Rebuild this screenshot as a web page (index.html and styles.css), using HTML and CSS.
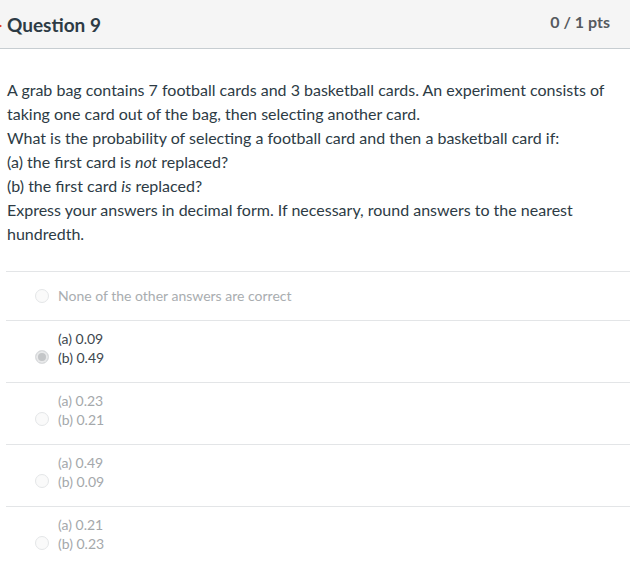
FILE: index.html
```html
<!DOCTYPE html>
<html>
<head>
<meta charset="utf-8">
<link rel="stylesheet" href="styles.css">
</head>
<body>
<div class="question">
  <div class="header">
    <span class="flag"></span>
    <h2 class="title">Question 9</h2>
    <span class="pts">0 / 1 pts</span>
  </div>
  <div class="text">
    A grab bag contains 7 football cards and 3 basketball cards. An experiment consists of taking one card out of the bag, then selecting another card.<br>
    What is the probability of selecting a football card and then a basketball card if:<br>
    (a) the first card is <em>not</em> replaced?<br>
    (b) the first card <em>is</em> replaced?<br>
    Express your answers in decimal form. If necessary, round answers to the nearest hundredth.
  </div>
  <div class="answers">
    <div class="answer single">
      <span class="radio"></span>
      <div class="label">None of the other answers are correct</div>
    </div>
    <div class="answer selected">
      <span class="radio"></span>
      <div class="label">(a) 0.09<br>(b) 0.49</div>
    </div>
    <div class="answer">
      <span class="radio"></span>
      <div class="label">(a) 0.23<br>(b) 0.21</div>
    </div>
    <div class="answer">
      <span class="radio"></span>
      <div class="label">(a) 0.49<br>(b) 0.09</div>
    </div>
    <div class="answer last">
      <span class="radio"></span>
      <div class="label">(a) 0.21<br>(b) 0.23</div>
    </div>
  </div>
</div>
</body>
</html>
```

FILE: styles.css
```css
html, body {
  margin: 0;
  padding: 0;
  background: #fff;
}
body {
  font-family: Lato, "Open Sans", "Liberation Sans", sans-serif;
  color: #2d3b45;
}
.header {
  position: relative;
  height: 48px;
  background: #f5f5f5;
  border-bottom: 1px solid #c7cdd1;
  display: flex;
  align-items: center;
  justify-content: space-between;
  padding: 0 20px 0 7px;
}
.flag {
  position: absolute;
  left: -4px;
  top: 22px;
  width: 0;
  height: 0;
  border-top: 4px solid transparent;
  border-bottom: 4px solid transparent;
  border-left: 6px solid #e0261b;
}
.title {
  margin: 0;
  font-size: 19px;
  font-weight: 700;
  color: #2d3b45;
  padding-top: 1px;
}
.pts {
  font-size: 16px;
  font-weight: 700;
  color: #555a5e;
  padding-bottom: 6px;
}
.text {
  padding: 29px 20px 0 7px;
  font-size: 16px;
  line-height: 24px;
  color: #2d3b45;
}
.answers {
  margin: 25px 0 0 6px;
  border-top: 1px solid #e3e5e7;
}
.answer {
  display: flex;
  align-items: flex-end;
  border-bottom: 1px solid #e3e5e7;
  padding: 8px 0 15px 29px;
  font-size: 14px;
  line-height: 19px;
  color: #a4a8ab;
}
.answer.single {
  align-items: center;
  padding: 14px 0 14px 29px;
  line-height: 20px;
  color: #a9adb0;
}
.answer.last {
  border-bottom: none;
}
.radio {
  width: 12px;
  height: 12px;
  border: 1px solid #e4e6e8;
  border-radius: 50%;
  background: #fafafa;
  margin-right: 9px;
  margin-bottom: 3px;
  flex: none;
}
.answer.single .radio {
  margin-bottom: 0;
}
.answer.selected {
  color: #3d474e;
}
.answer.selected .radio {
  background: #c4c6c8;
  border: 1px solid #dcdee0;
  box-shadow: inset 0 0 0 2px #e8e9ea;
}
.label {
  flex: 1;
}
```
